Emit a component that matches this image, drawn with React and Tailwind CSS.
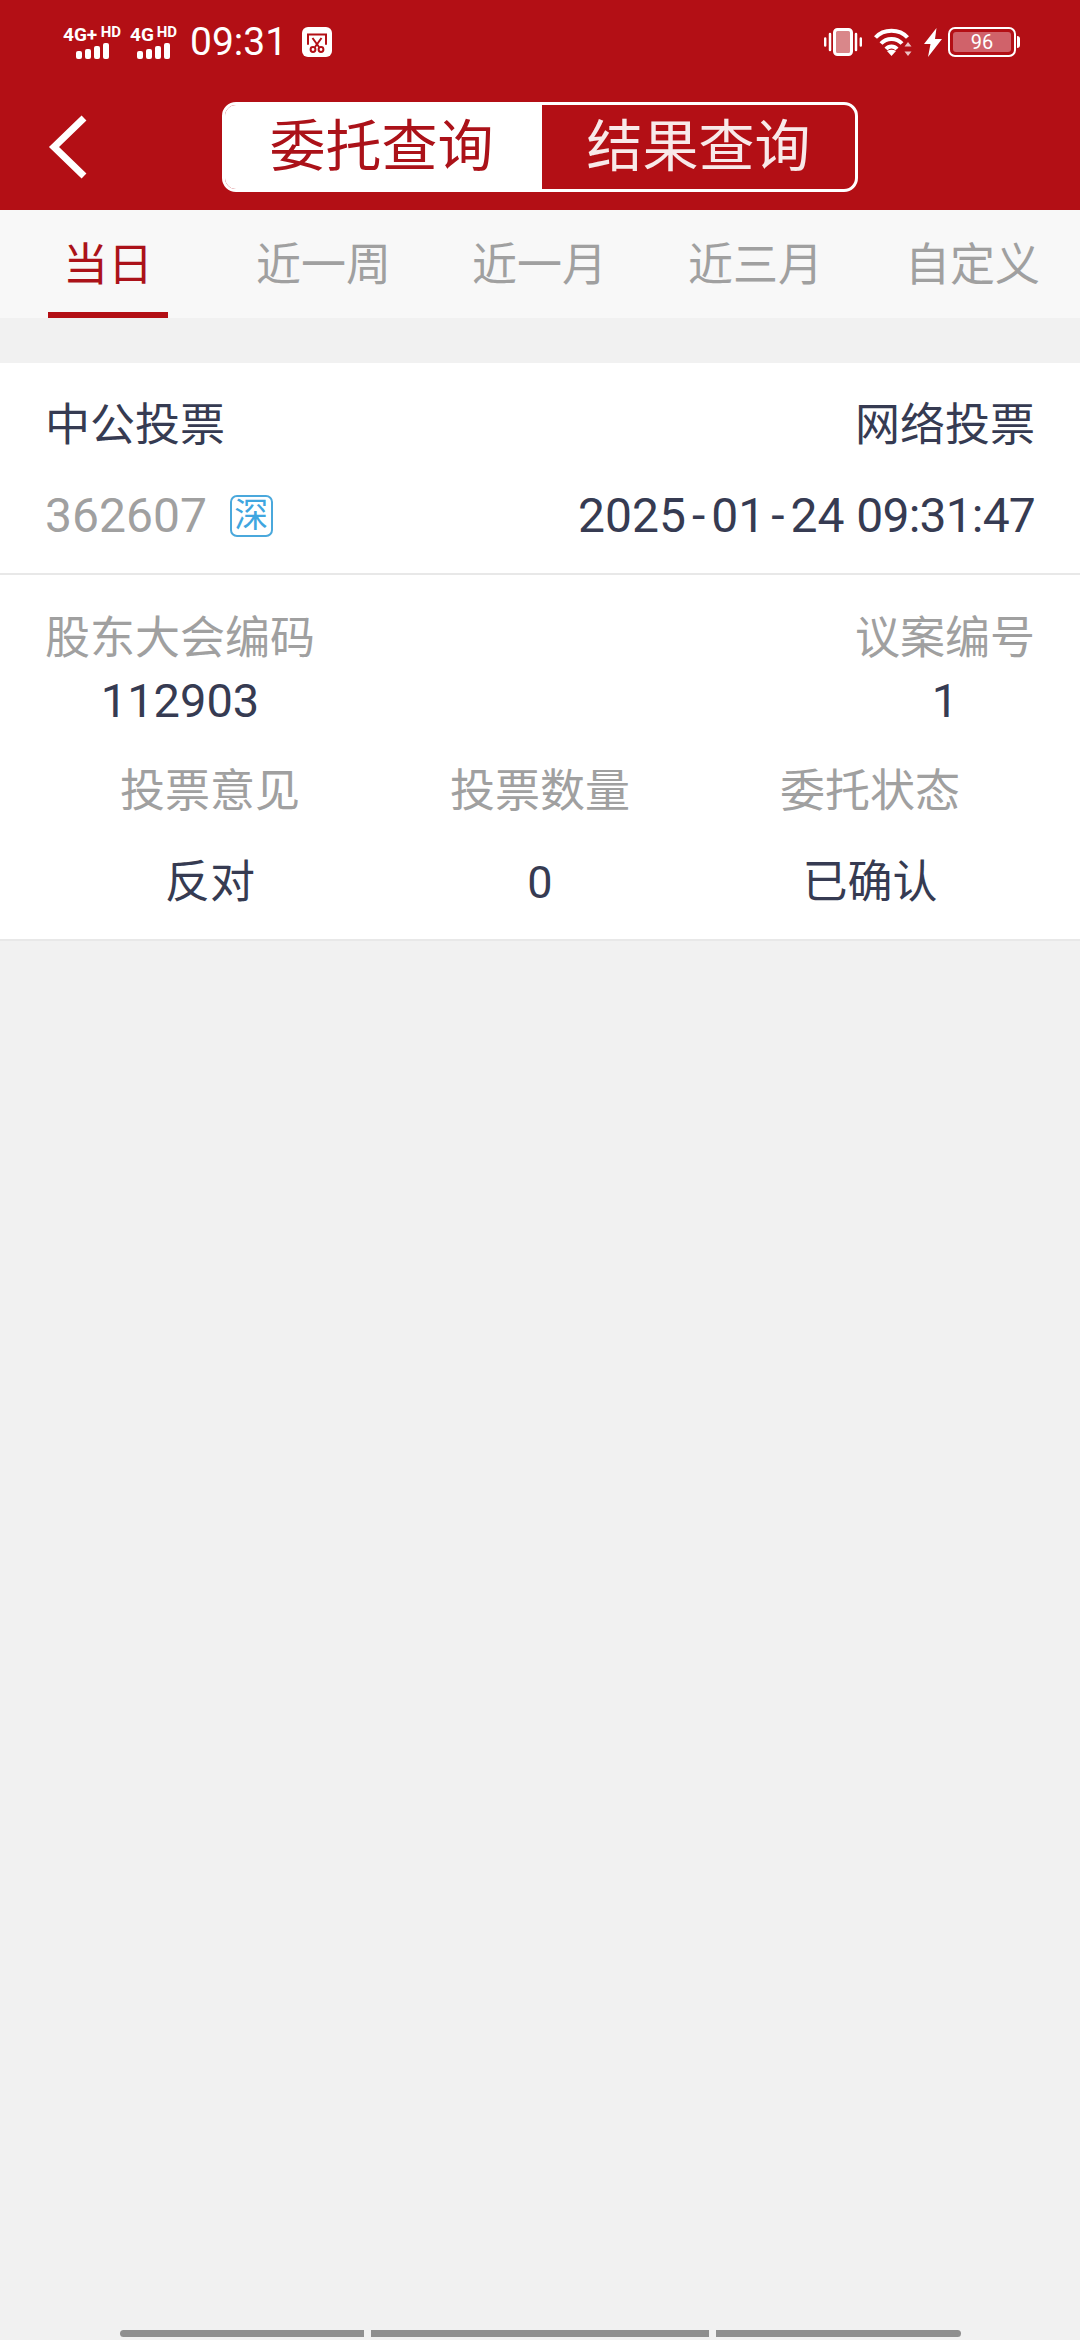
const tabs = [
  { label: "当日", cls: "w-[120px] text-[#ab1219] border-[#b30f15]" },
  { label: "近一周", cls: "ml-[88px] text-[#a0a0a0] border-transparent" },
  { label: "近一月", cls: "ml-[81px] text-[#a0a0a0] border-transparent" },
  { label: "近三月", cls: "ml-[81px] text-[#a0a0a0] border-transparent" },
  { label: "自定义", cls: "ml-[82px] text-[#a0a0a0] border-transparent" },
];

function Bars() {
  return (
    <div className="flex items-end gap-[3px] h-[16px] self-center">
      <span className="w-[6px] h-[8px] rounded-[2px] bg-white" />
      <span className="w-[6px] h-[10px] rounded-[2px] bg-white" />
      <span className="w-[6px] h-[13px] rounded-[2px] bg-white" />
      <span className="w-[6px] h-[16px] rounded-[2px] bg-white" />
    </div>
  );
}

function Signal({ label, hd, w }) {
  return (
    <div className={`flex flex-col ${w}`}>
      <div className="flex items-start h-[17px] leading-[17px] text-white font-bold text-[19px]">
        <span>{label}</span>
        <span className="ml-auto text-[15px] leading-[13px]">{hd}</span>
      </div>
      <Bars />
    </div>
  );
}

function CutIcon() {
  return (
    <div className="ml-[15px] w-[30px] h-[30px] rounded-[6px] bg-white flex items-center justify-center">
      <svg width="24" height="24" viewBox="0 0 24 24" fill="none" stroke="#b30f15" strokeWidth="2">
        <path d="M3 14V4.5h18V14" strokeLinecap="round" />
        <path d="M7.5 8l6.5 9M16.5 8L10 17" />
        <circle cx="8" cy="19.5" r="2.4" />
        <circle cx="16" cy="19.5" r="2.4" />
      </svg>
    </div>
  );
}

function VibrateIcon() {
  return (
    <svg width="38" height="28" viewBox="0 0 38 28">
      <rect x="10.5" y="1.5" width="17" height="25" rx="3" fill="#ffffff" fillOpacity="0.5" stroke="#fff" strokeWidth="3" />
      <path d="M6 6v16M32 6v16" stroke="#fff" strokeWidth="2.5" strokeLinecap="round" />
      <path d="M1.2 10.5v7M36.8 10.5v7" stroke="#fff" strokeWidth="2.4" strokeLinecap="round" />
    </svg>
  );
}

function WifiIcon() {
  return (
    <svg width="38" height="28" viewBox="0 0 38 28" fill="none" stroke="#fff" strokeWidth="4">
      <path d="M1.5 9.5C9.5 .5 25.5 .5 33.5 9.5" />
      <path d="M7 15.5C12.5 9.5 22.5 9.5 28 15.5" />
      <path d="M12 21C15 17.5 20 17.5 23 21" />
      <path d="M17.5 28l-4.5-5c2.8-1.8 6.2-1.8 9 0z" fill="#fff" stroke="none" />
      <path d="M34 14l3.5 4.5h-7zM34 28l3.5-4.5h-7z" fill="#fff" fillOpacity="0.75" stroke="none" />
    </svg>
  );
}

function BoltIcon() {
  return (
    <svg width="18" height="29" viewBox="0 0 18 29" fill="#fff">
      <path d="M12.5 0L0 16h6.5L4 29 18 11h-7z" />
    </svg>
  );
}

function Battery() {
  return (
    <div className="flex items-center ml-[6px]">
      <div className="w-[68px] h-[30px] rounded-[7px] border-[2px] border-white p-[3px]">
        <div className="h-full rounded-[3px] bg-[#d0626a] flex items-center justify-center text-white text-[20px] leading-none">
          96
        </div>
      </div>
      <span className="ml-[1px] w-[3px] h-[12px] rounded-r-[3px] bg-white" />
    </div>
  );
}

export default function App() {
  return (
    <div className="w-[1080px] h-[2340px] flex flex-col bg-[#f1f1f1] font-['Roboto','Noto_Sans_CJK_SC',sans-serif] overflow-hidden">
      <header className="h-[210px] pt-[27px] bg-[#b30f15]">
        <div className="flex items-center h-[30px] pl-[63px] pr-[60px]">
          <Signal label="4G+" hd="HD" w="w-[58px]" />
          <div className="ml-[9px]">
            <Signal label="4G" hd="HD" w="w-[47px]" />
          </div>
          <span className="ml-[13px] text-white text-[39px] leading-[30px]">09:31</span>
          <CutIcon />
          <div className="ml-auto flex items-center gap-[12px]">
            <VibrateIcon />
            <WifiIcon />
            <BoltIcon />
          </div>
          <Battery />
        </div>
        <div className="flex items-center pt-[45px] pl-[48px]">
          <svg width="40" height="64" viewBox="0 0 40 64" fill="none" stroke="#fff" strokeWidth="7">
            <path d="M36 3L6 32l30 29" />
          </svg>
          <div className="ml-[134px] w-[636px] h-[90px] flex rounded-[14px] border-[3px] border-white overflow-hidden text-[56px] leading-[84px] text-center">
            <div className="w-[317px] pr-[4px] bg-white text-[#ab1219]">委托查询</div>
            <div className="flex-1 text-[#f8e9e9]">结果查询</div>
          </div>
        </div>
      </header>

      <nav className="h-[108px] flex pl-[48px] bg-[#f8f8f8]">
        {tabs.map((t) => (
          <div key={t.label} className={`h-full border-b-[6px] text-center text-[45px] leading-[112px] ${t.cls}`}>
            {t.label}
          </div>
        ))}
      </nav>

      <section className="mt-[45px] bg-white">
        <div className="h-[212px] px-[45px] border-b-2 border-[#e8e8e8] text-[#363b52]">
          <div className="flex justify-between pt-[35px] text-[45px] leading-[56px]">
            <span>中公投票</span>
            <span>网络投票</span>
          </div>
          <div className="flex items-center mt-[32px] h-[60px]">
            <span className="text-[48px] text-[#a0a0a0]">362607</span>
            <span className="ml-[23px] w-[43px] h-[42px] rounded-[7px] border-2 border-[#4aa8dc] text-[#3fa6e0] text-[34px] leading-[37px] text-center">
              深
            </span>
            <span className="ml-auto text-[48px]">
              2025<span className="mx-[6px]">-</span>01<span className="mx-[6px]">-</span>24{" "}
              <span className="tracking-[-0.8px]">09:31:47</span>
            </span>
          </div>
        </div>

        <div className="h-[366px] border-b-2 border-[#e8e8e8] text-[45px] text-center">
          <div className="flex justify-between px-[45px] pt-[36px]">
            <div>
              <div className="leading-[56px] text-[#a0a0a0]">股东大会编码</div>
              <div className="leading-[56px] mt-[6px] text-[47px] text-[#363b52]">112903</div>
            </div>
            <div>
              <div className="leading-[56px] text-[#a0a0a0]">议案编号</div>
              <div className="leading-[56px] mt-[6px] text-[47px] text-[#363b52]">1</div>
            </div>
          </div>
          <div className="grid grid-cols-3 px-[45px] mt-[35px]">
            {[
              ["投票意见", "反对"],
              ["投票数量", "0"],
              ["委托状态", "已确认"],
            ].map(([k, v]) => (
              <div key={k}>
                <div className="leading-[56px] text-[#a0a0a0]">{k}</div>
                <div className="leading-[56px] mt-[35px] text-[#363b52]">{v}</div>
              </div>
            ))}
          </div>
        </div>
      </section>

      <div className="mt-auto mb-[3px] flex justify-center gap-[7px]">
        <span className="w-[244px] h-[7px] rounded-l-[4px] bg-[#8f8f8f]" />
        <span className="w-[338px] h-[7px] bg-[#8f8f8f]" />
        <span className="w-[245px] h-[7px] rounded-r-[4px] bg-[#8f8f8f]" />
      </div>
    </div>
  );
}
